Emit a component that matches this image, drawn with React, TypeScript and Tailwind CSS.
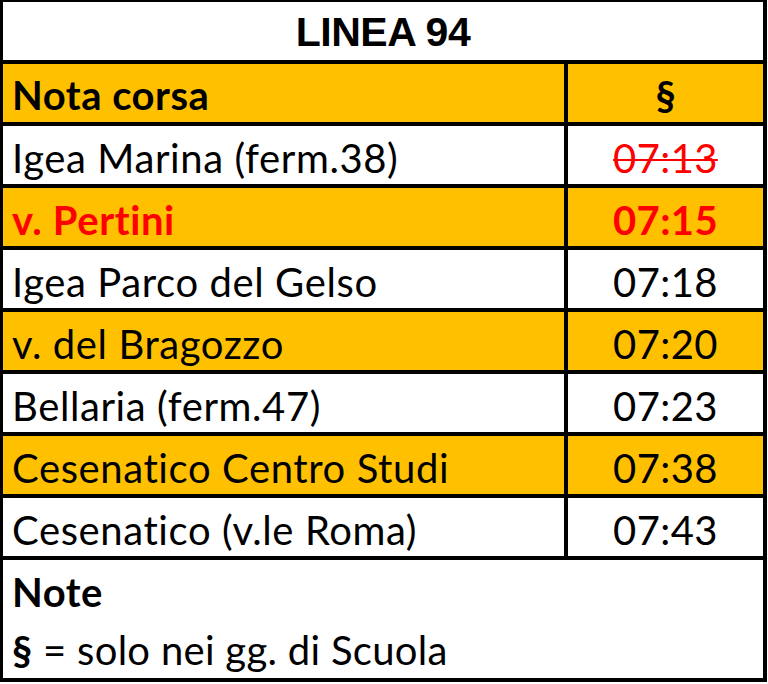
const rows = [
  { stop: 'Igea Marina (ferm.38)', time: '07:13', yellow: false, red: false, struck: true },
  { stop: 'v. Pertini', time: '07:15', yellow: true, red: true, struck: false },
  { stop: 'Igea Parco del Gelso', time: '07:18', yellow: false, red: false, struck: false },
  { stop: 'v. del Bragozzo', time: '07:20', yellow: true, red: false, struck: false },
  { stop: 'Bellaria (ferm.47)', time: '07:23', yellow: false, red: false, struck: false },
  { stop: 'Cesenatico Centro Studi', time: '07:38', yellow: true, red: false, struck: false },
  { stop: 'Cesenatico (v.le Roma)', time: '07:43', yellow: false, red: false, struck: false },
];

export default function App() {
  return (
    <div className="w-[768px] h-[684px] bg-white">
      <div
        className="w-[767px] h-[682px] bg-black pt-[2px] pl-[3px] pr-[4px] pb-[4px] flex flex-col gap-[4px] text-black"
        style={{ fontFamily: 'Lato, "Noto Sans", sans-serif' }}
      >
        {/* titolo */}
        <div className="h-[58px] bg-white flex items-center justify-center">
          <span
            className="text-[41px] font-bold tracking-[-0.5px] leading-none pt-[2px]"
            style={{ fontFamily: '"Liberation Sans", Arial, sans-serif' }}
          >
            LINEA 94
          </span>
        </div>

        {/* intestazione */}
        <div className="h-[58px] flex gap-[4px]">
          <div className="w-[561px] bg-[#ffc000] flex items-center pl-[9px] pt-[4px]">
            <span className="text-[40px] font-bold leading-none tracking-[0.5px]">Nota corsa</span>
          </div>
          <div className="flex-1 bg-[#ffc000] flex items-center justify-center pt-[4px]">
            <span className="text-[40px] font-bold leading-none">§</span>
          </div>
        </div>

        {rows.map((r) => {
          const bg = r.yellow ? 'bg-[#ffc000]' : 'bg-white';
          const color = r.red ? 'text-[#ff0000] font-bold' : '';
          return (
            <div key={r.stop} className="h-[58px] flex gap-[4px]">
              <div className={`w-[561px] ${bg} flex items-center pl-[9px] pt-[5px]`}>
                <span className={`text-[40px] leading-none tracking-[0.6px] ${color}`}>{r.stop}</span>
              </div>
              <div className={`flex-1 ${bg} flex items-center justify-center pt-[5px]`}>
                <span
                  className={`text-[40px] leading-none tracking-[0.4px] ${color} ${
                    r.struck ? 'text-[#ff0000] line-through decoration-2' : ''
                  }`}
                >
                  {r.time}
                </span>
              </div>
            </div>
          );
        })}

        {/* note */}
        <div className="flex-1 bg-white flex flex-col pl-[9px] pt-[12px] gap-[18px]">
          <span className="text-[40px] font-bold leading-none tracking-[0.5px]">Note</span>
          <span className="text-[40px] leading-none tracking-[0.3px]">
            <span className="font-bold">§</span> = solo nei gg. di Scuola
          </span>
        </div>
      </div>
    </div>
  );
}
